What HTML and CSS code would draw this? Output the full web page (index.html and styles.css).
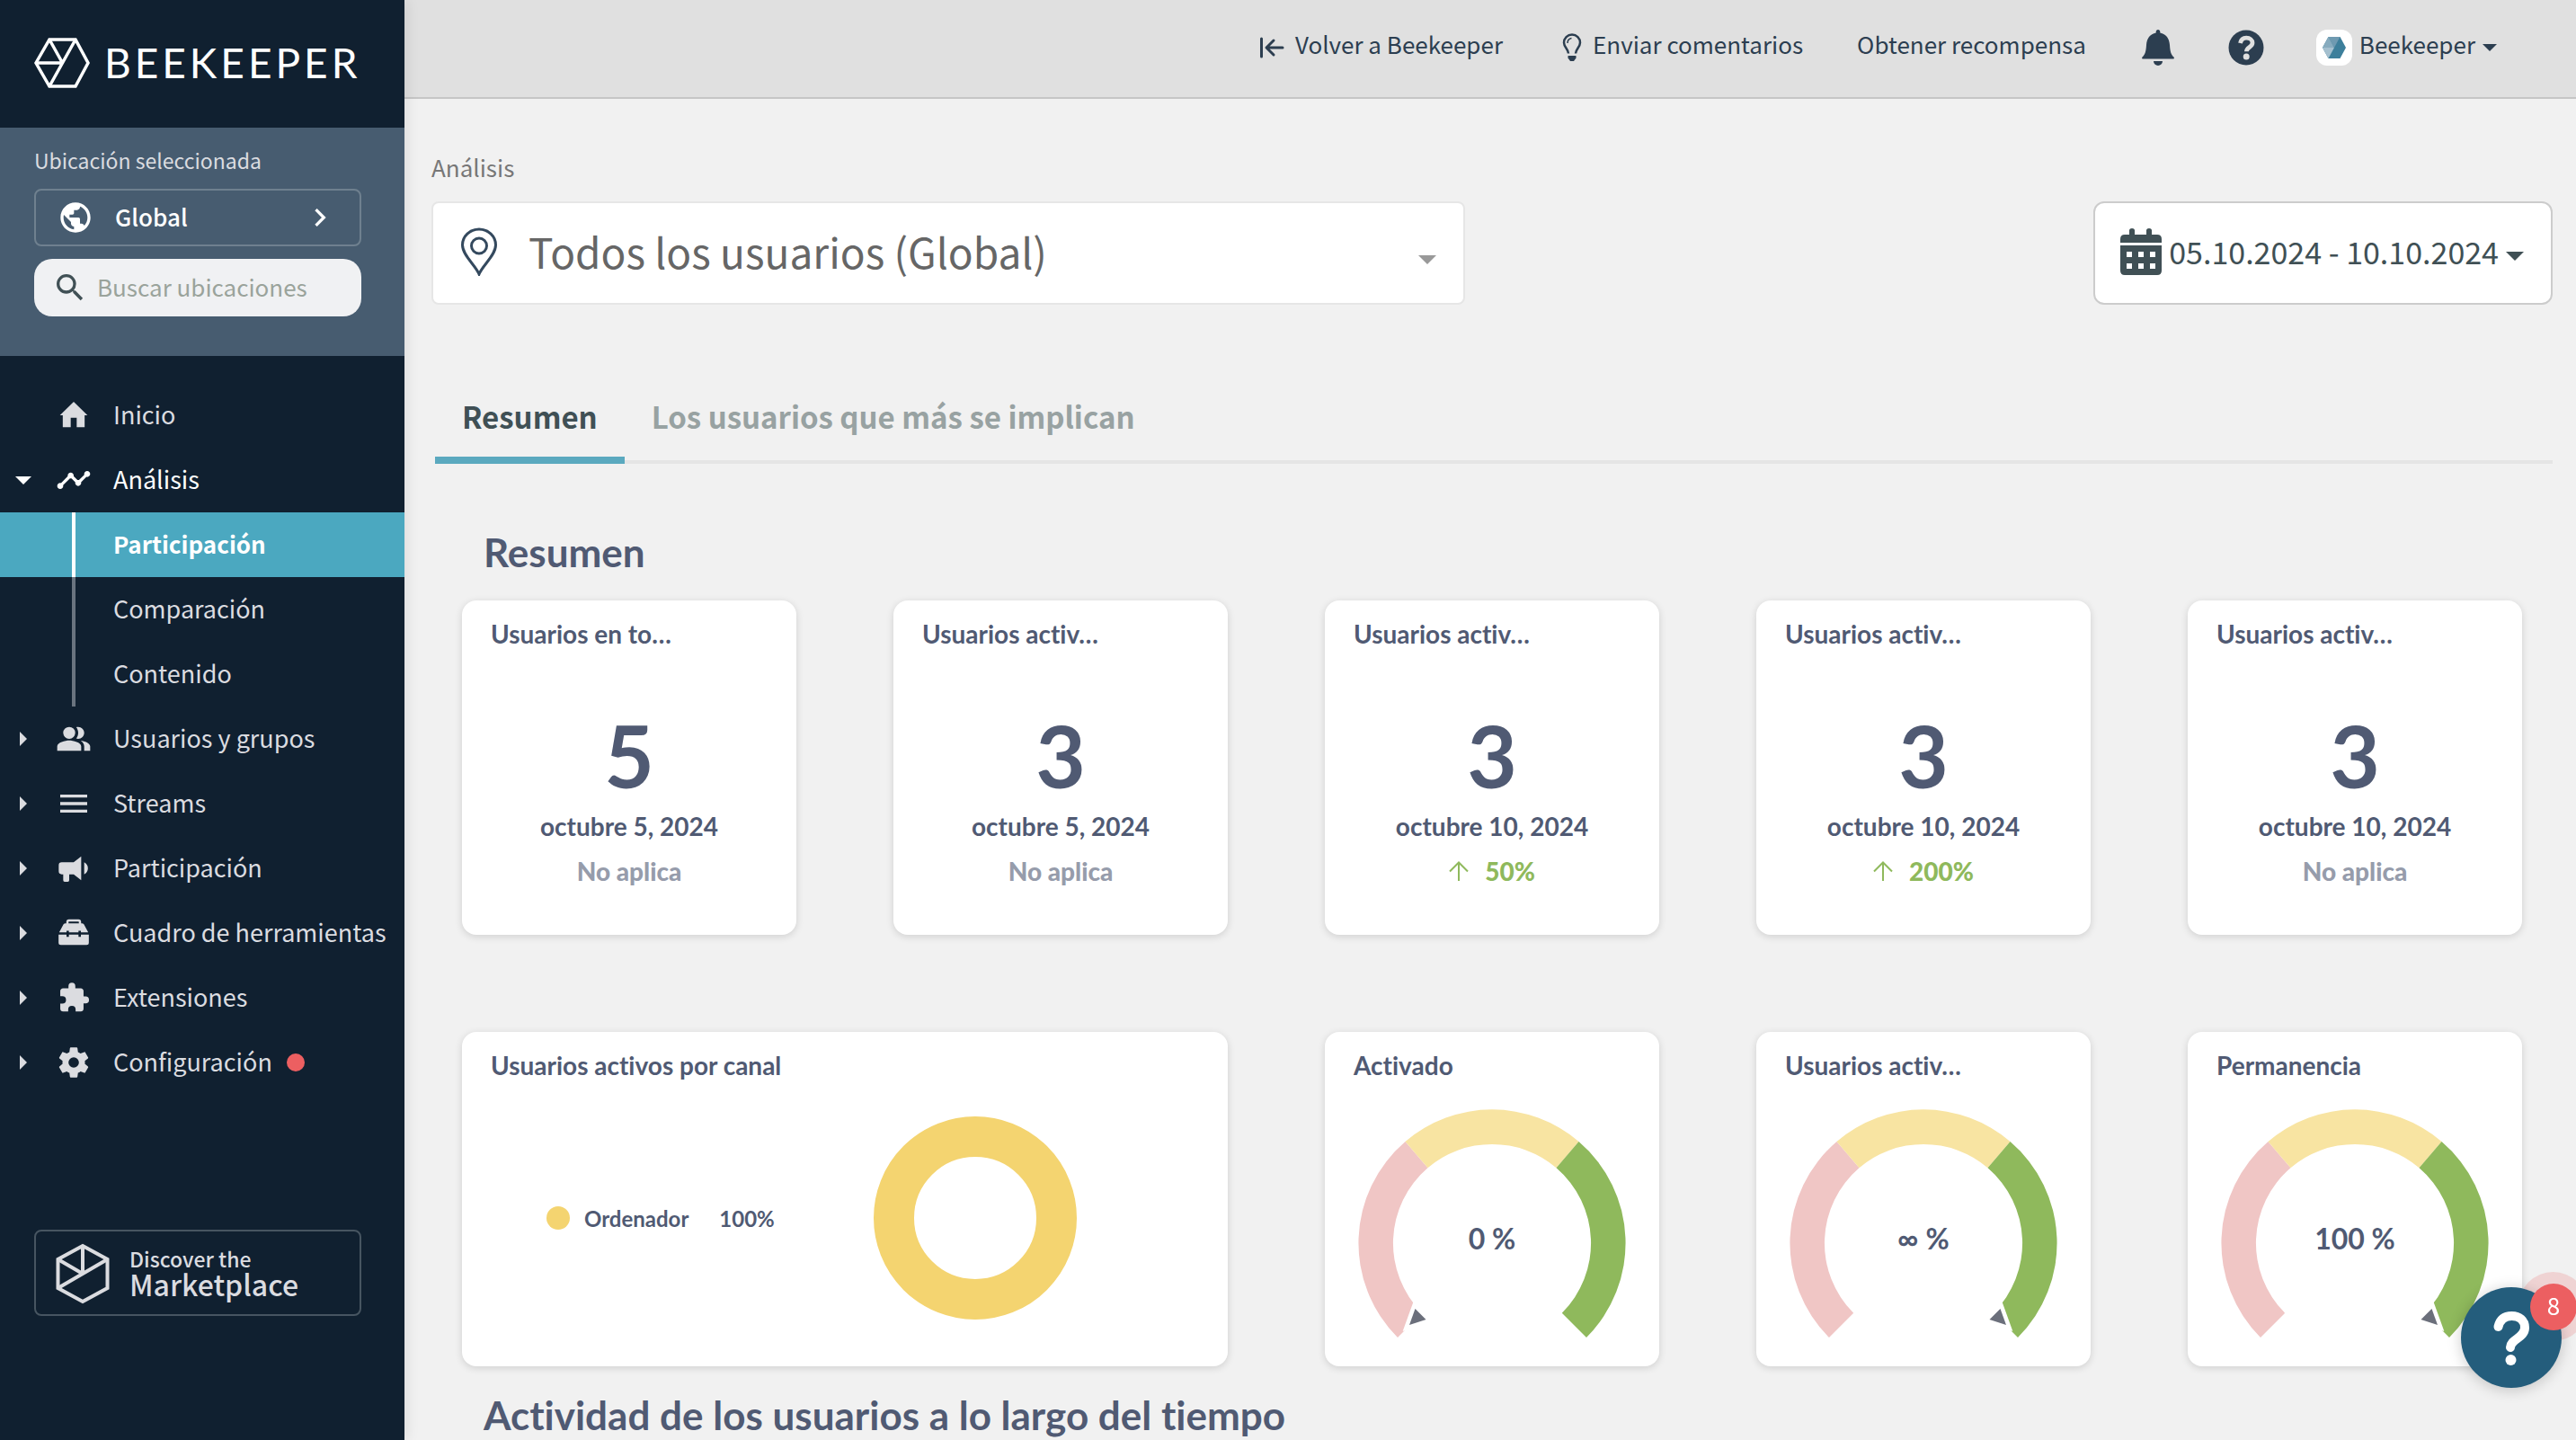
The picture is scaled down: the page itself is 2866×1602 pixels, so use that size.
FILE: index.html
```
<!DOCTYPE html>
<html lang="es">
<head>
  <meta charset="UTF-8">
  <meta name="viewport" content="width=device-width, initial-scale=1.0">
  <title>Análisis - Beekeeper</title>
  <link rel="stylesheet" href="styles.css">
</head>
<body>
  <div class="app">
    <aside class="sidebar">
      <a class="logo" href="#">
        <svg class="logo-mark" viewBox="0 0 62 56" fill="none" stroke="#fff" stroke-width="3.5">
          <path d="M2 28 17 2h29l14 26-14 26H17z"/>
          <path d="M2 28h29M17 2l14.500 26M46 2 17 54"/>
        </svg>
        <span class="logo-text">BEEKEEPER</span>
      </a>

      <div class="location">
        <div class="location-label">Ubicación seleccionada</div>
        <button class="location-button">
          <svg class="icon" viewBox="0 0 24 24"><path d="M12 2C6.480 2 2 6.480 2 12s4.480 10 10 10 10-4.480 10-10S17.520 2 12 2zm-1 17.930c-3.950-.490-7-3.850-7-7.930 0-.620.080-1.210.210-1.790L9 15v1c0 1.100.900 2 2 2v1.930zm6.900-2.540c-.260-.810-1-1.390-1.900-1.390h-1v-3c0-.550-.450-1-1-1H8v-2h2c.550 0 1-.450 1-1V7h2c1.100 0 2-.900 2-2v-.410c2.930 1.190 5 4.060 5 7.410 0 2.080-.800 3.970-2.100 5.390z"/></svg>
          <span>Global</span>
          <svg class="icon" viewBox="0 0 24 24"><path d="M10 6 8.590 7.410 13.170 12l-4.580 4.590L10 18l6-6z"/></svg>
        </button>
        <label class="search">
          <svg class="icon" viewBox="0 0 24 24"><path d="M15.500 14h-.790l-.280-.270A6.471 6.471 0 0 0 16 9.500 6.500 6.500 0 1 0 9.500 16c1.610 0 3.090-.590 4.230-1.570l.270.280v.790l5 4.990L20.490 19l-4.990-5zm-6 0C7.010 14 5 11.990 5 9.500S7.010 5 9.500 5 14 7.010 14 9.500 11.990 14 9.500 14z"/></svg>
          <input type="search" placeholder="Buscar ubicaciones" aria-label="Buscar ubicaciones">
        </label>
      </div>

      <nav class="menu">
        <a class="menu-item" href="#">
          <svg class="icon" viewBox="0 0 24 24"><path d="M10 20v-6.300h4V20h5.300v-8h1.900L12 3l-9.200 9h1.900v8z"/></svg>
          <span>Inicio</span>
        </a>
        <a class="menu-item expandable open" href="#">
          <svg class="icon" viewBox="0 0 24 24"><path d="M23 8c0 1.100-.900 2-2 2-.180 0-.350-.020-.510-.070l-3.560 3.550c.050.160.070.340.070.520 0 1.100-.900 2-2 2s-2-.900-2-2c0-.180.020-.360.070-.520l-2.550-2.550c-.160.050-.340.070-.520.070s-.360-.020-.520-.070l-4.550 4.560c.050.160.070.330.070.510 0 1.100-.900 2-2 2s-2-.900-2-2 .900-2 2-2c.180 0 .350.020.510.070l4.560-4.550C8.020 9.360 8 9.180 8 9c0-1.100.900-2 2-2s2 .900 2 2c0 .180-.020.360-.070.520l2.550 2.550c.160-.050.340-.070.520-.070s.360.020.520.070l3.550-3.560C19.020 8.350 19 8.180 19 8c0-1.100.900-2 2-2s2 .900 2 2z"/></svg>
          <span>Análisis</span>
        </a>
        <div class="submenu">
          <a class="submenu-item active" href="#"><span>Participación</span></a>
          <a class="submenu-item" href="#"><span>Comparación</span></a>
          <a class="submenu-item" href="#"><span>Contenido</span></a>
        </div>
        <a class="menu-item expandable" href="#">
          <svg class="icon" viewBox="0 0 24 24"><circle cx="9" cy="8" r="4"/><path d="M16.670 13.130C18.040 14.060 19 15.320 19 17v3h4v-3c0-2.180-3.570-3.470-6.330-3.870zM15 12c2.210 0 4-1.790 4-4s-1.790-4-4-4c-.470 0-.910.100-1.330.240C14.500 5.270 15 6.580 15 8s-.500 2.730-1.330 3.760c.420.140.860.240 1.330.240zM9 13c-2.670 0-8 1.340-8 4v3h16v-3c0-2.660-5.330-4-8-4z"/></svg>
          <span>Usuarios y grupos</span>
        </a>
        <a class="menu-item expandable" href="#">
          <svg class="icon" viewBox="0 0 24 24"><path d="M3 18h18v-2H3zm0-5h18v-2H3zm0-7v2h18V6z"/></svg>
          <span>Streams</span>
        </a>
        <a class="menu-item expandable" href="#">
          <svg class="icon" viewBox="0 0 24 24"><path d="M12 8H4a2 2 0 0 0-2 2v4a2 2 0 0 0 2 2h1v4a1 1 0 0 0 1 1h2a1 1 0 0 0 1-1v-4h3l5 4V4l-5 4m9.500 4c0 1.710-.960 3.260-2.500 4V8c1.530.750 2.500 2.300 2.500 4z"/></svg>
          <span>Participación</span>
        </a>
        <a class="menu-item expandable" href="#">
          <svg class="icon" viewBox="0 0 24 24">
            <path d="M7.800 6V4.600q0-1 1-1h6.400q1 0 1 1V6" fill="none" stroke="currentColor" stroke-width="1.500"/>
            <path d="M6.500 5.500h11q.800 0 1.300.700l2.900 5.300H2.300l2.900-5.300q.500-.700 1.300-.700zM1.900 13h20.200v5.500q0 1.500-1.500 1.500H3.400q-1.500 0-1.500-1.500z"/>
            <path d="M8 10.500v4M16 10.500v4" stroke="#102030" stroke-width="1.600"/>
          </svg>
          <span>Cuadro de herramientas</span>
        </a>
        <a class="menu-item expandable" href="#">
          <svg class="icon" viewBox="0 0 24 24"><path transform="translate(1.200 1.100) scale(.914)" d="M20.500 11H19V7c0-1.100-.900-2-2-2h-4V3.500a2.500 2.500 0 0 0-5 0V5H4c-1.100 0-2 .900-2 2v3.800h1.500a2.700 2.700 0 0 1 0 5.400H2V20c0 1.100.900 2 2 2h3.800v-1.500a2.700 2.700 0 0 1 5.400 0V22H17c1.100 0 2-.900 2-2v-4h1.500a2.500 2.500 0 0 0 0-5z"/></svg>
          <span>Extensiones</span>
        </a>
        <a class="menu-item expandable" href="#">
          <svg class="icon" viewBox="0 0 24 24"><path d="M12 15.500A3.500 3.500 0 0 1 8.500 12 3.500 3.500 0 0 1 12 8.500a3.500 3.500 0 0 1 3.500 3.500 3.500 3.500 0 0 1-3.500 3.500m7.430-2.530c.040-.320.070-.640.070-.970s-.030-.660-.070-1l2.110-1.630c.190-.150.240-.420.120-.640l-2-3.460c-.120-.220-.390-.310-.610-.220l-2.490 1c-.520-.390-1.060-.730-1.690-.980l-.370-2.650A.506.506 0 0 0 14 2h-4c-.250 0-.460.180-.500.420l-.370 2.650c-.630.250-1.170.590-1.690.980l-2.490-1c-.220-.090-.490 0-.610.220l-2 3.460c-.130.220-.070.490.120.640L4.570 11c-.040.340-.070.670-.070 1s.030.650.070.970l-2.110 1.660c-.190.150-.250.420-.120.640l2 3.460c.120.220.390.300.610.220l2.490-1.010c.520.400 1.060.740 1.690.990l.370 2.650c.040.240.250.420.500.420h4c.250 0 .460-.180.500-.420l.370-2.650c.630-.260 1.170-.590 1.690-.990l2.490 1.010c.220.080.490 0 .610-.220l2-3.460c.120-.220.070-.490-.120-.640z"/></svg>
          <span>Configuración</span>
          <i class="dot"></i>
        </a>
      </nav>

      <a class="marketplace" href="#">
        <svg viewBox="0 0 60 68" fill="none" stroke="currentColor" stroke-width="4">
          <path d="M30 3 57.500 18v32L30 65 2.500 50V18z"/>
          <path d="M30 3v31M2.500 18 30 34M57.500 18 2.500 50"/>
        </svg>
        <span class="marketplace-text">
          <small>Discover the</small>
          <strong>Marketplace</strong>
        </span>
      </a>
    </aside>

    <div class="page">
      <header class="topbar">
        <a class="top-link back" href="#">
          <svg width="28" height="24" viewBox="0 0 28 24" fill="none" stroke="currentColor" stroke-width="3" stroke-linecap="round" stroke-linejoin="round"><path d="M2.500 2v20M26 12H9M16 4l-8 8 8 8"/></svg>
          <span>Volver a Beekeeper</span>
        </a>
        <a class="top-link feedback" href="#">
          <svg width="22" height="32" viewBox="0 0 22 32" fill="none" stroke="currentColor" stroke-width="2.500">
            <path d="M7 22.500C7 18 2 15.500 2 10.500a9 9 0 0 1 18 0c0 5-5 7.500-5 12"/>
            <path d="M6 11c0-3 1.500-5 4.500-5.500" stroke-width="1.500"/>
            <path d="M6.500 25h9v2.500L13 31H9l-2.500-3.500z" fill="currentColor" stroke="none"/>
          </svg>
          <span>Enviar comentarios</span>
        </a>
        <a class="top-link reward" href="#"><span>Obtener recompensa</span></a>
        <button class="icon-button bell" aria-label="Notificaciones">
          <svg width="36" height="40" viewBox="0 0 36 40"><path d="M18 0c1.400 0 2.300 1 2.300 2.300v1.200C27 4.800 30.500 10 31 17c.5 8 1.500 10.500 4.500 13.500.8.900.3 2-.9 2H1.400c-1.200 0-1.700-1.100-.9-2C3.500 27.500 4.500 25 5 17 5.500 10 9 4.800 15.700 3.500V2.300C15.700 1 16.600 0 18 0zM13 35h10a5 5 0 0 1-10 0z"/></svg>
        </button>
        <button class="icon-button help" aria-label="Ayuda">
          <svg width="40" height="40" viewBox="0 0 40 40"><circle cx="20" cy="20" r="19.500"/><path d="M13.500 15c.8-4 3-5.800 6.700-5.800 4 0 6.800 2.300 6.800 5.600 0 4.700-6.600 4.600-6.600 9.400" fill="none" stroke="#e0e0e0" stroke-width="4.800"/><circle cx="20.200" cy="30" r="3.500" fill="#e0e0e0"/></svg>
        </button>
        <button class="account">
          <svg class="avatar" viewBox="0 0 40 40">
            <path d="M7 20 13.500 8h13L33 20l-6.500 12h-13z" fill="#3d7f9b"/>
            <path d="M13.500 8h13L20 20z" fill="#6f9ab1"/>
            <path d="M13.500 8 7 20h13z" fill="#87abbe"/>
            <path d="M7 20h13l-6.500 12z" fill="#a5c0cf"/>
          </svg>
          <span>Beekeeper</span>
          <i class="caret"></i>
        </button>
      </header>

      <main class="content">
        <label class="filter-label" for="segment">Análisis</label>
        <div class="filters">
          <div class="segment">
            <svg width="42" height="54" viewBox="0 0 42 54" fill="none" stroke="#34495e" stroke-width="3"><path d="M21 52C17 42 2.500 31 2.500 19.500a18.500 17.500 0 0 1 37 0C39.500 31 25 42 21 52z"/><circle cx="21" cy="20.500" r="8.500"/></svg>
            <select id="segment">
              <option>Todos los usuarios (Global)</option>
            </select>
            <i class="caret"></i>
          </div>
          <button class="date-range">
            <svg width="46" height="52" viewBox="0 0 46 52">
              <path d="M0 16v-4q0-5 5-5h5V2.500a3 2.500 0 0 1 6 0V7h13V2.500a3 2.500 0 0 1 6 0V7h6q5 0 5 5v4zM0 19h46v28q0 5-5 5H5q-5 0-5-5z"/>
              <path d="M7 26h6v6H7zm13 0h6v6h-6zm13 0h6v6h-6zM7 39h6v6H7zm13 0h6v6h-6zm13 0h6v6h-6z" fill="#fff"/>
            </svg>
            <span>05.10.2024 - 10.10.2024</span>
            <i class="caret"></i>
          </button>
        </div>

        <nav class="tabs">
          <a class="tab active" href="#">Resumen</a>
          <a class="tab" href="#">Los usuarios que más se implican</a>
        </nav>

        <section class="dashboard">
          <h2>Resumen</h2>
          <div class="cards">
            <article class="card">
              <h3>Usuarios en to…</h3>
              <div class="number">5</div>
              <div class="date">octubre 5, 2024</div>
              <div class="change">No aplica</div>
            </article>
            <article class="card">
              <h3>Usuarios activ…</h3>
              <div class="number">3</div>
              <div class="date">octubre 5, 2024</div>
              <div class="change">No aplica</div>
            </article>
            <article class="card">
              <h3>Usuarios activ…</h3>
              <div class="number">3</div>
              <div class="date">octubre 10, 2024</div>
              <div class="change up">
                <svg width="22" height="22" viewBox="0 0 22 22"><path d="M11 22V1.500M1 11.500l10-10 10 10"/></svg>
                <span>50%</span>
              </div>
            </article>
            <article class="card">
              <h3>Usuarios activ…</h3>
              <div class="number">3</div>
              <div class="date">octubre 10, 2024</div>
              <div class="change up">
                <svg width="22" height="22" viewBox="0 0 22 22"><path d="M11 22V1.500M1 11.500l10-10 10 10"/></svg>
                <span>200%</span>
              </div>
            </article>
            <article class="card">
              <h3>Usuarios activ…</h3>
              <div class="number">3</div>
              <div class="date">octubre 10, 2024</div>
              <div class="change">No aplica</div>
            </article>

            <article class="card wide">
              <h3>Usuarios activos por canal</h3>
              <div class="channel">
                <div class="legend">
                  <i class="legend-dot"></i>
                  <span>Ordenador</span>
                  <span class="legend-value">100%</span>
                </div>
                <svg width="226" height="226" viewBox="0 0 226 226"><circle cx="113" cy="113" r="90.500" fill="none" stroke="#f4d470" stroke-width="45"/></svg>
              </div>
            </article>
            <article class="card">
              <h3>Activado</h3>
              <svg class="gauge" viewBox="-149 -149 298 256">
                <path class="low" d="M-105 105A148.500 148.500 0 0 1-96.500-113L-71.500-83.700A110 110 0 0 0-77.800 77.800z"/>
                <path class="mid" d="M-96.500-113A148.500 148.500 0 0 1 96.500-113L71.500-83.700A110 110 0 0 0-71.500-83.700z"/>
                <path class="high" d="M96.500-113A148.500 148.500 0 0 1 105 105L77.800 77.800A110 110 0 0 0 71.500-83.700z"/>
                <path class="pointer" d="M-73.500 85-85.500 73-92 91z"/>
                <text x="0" y="7">0 %</text>
              </svg>
            </article>
            <article class="card">
              <h3>Usuarios activ…</h3>
              <svg class="gauge" viewBox="-149 -149 298 256">
                <path class="low" d="M-105 105A148.500 148.500 0 0 1-96.500-113L-71.500-83.700A110 110 0 0 0-77.800 77.800z"/>
                <path class="mid" d="M-96.500-113A148.500 148.500 0 0 1 96.500-113L71.500-83.700A110 110 0 0 0-71.500-83.700z"/>
                <path class="high" d="M96.500-113A148.500 148.500 0 0 1 105 105L77.800 77.800A110 110 0 0 0 71.500-83.700z"/>
                <path class="pointer" d="M73.500 85 85.500 73 92 91z"/>
                <text x="0" y="7">∞ %</text>
              </svg>
            </article>
            <article class="card">
              <h3>Permanencia</h3>
              <svg class="gauge" viewBox="-149 -149 298 256">
                <path class="low" d="M-105 105A148.500 148.500 0 0 1-96.500-113L-71.500-83.700A110 110 0 0 0-77.800 77.800z"/>
                <path class="mid" d="M-96.500-113A148.500 148.500 0 0 1 96.500-113L71.500-83.700A110 110 0 0 0-71.500-83.700z"/>
                <path class="high" d="M96.500-113A148.500 148.500 0 0 1 105 105L77.800 77.800A110 110 0 0 0 71.500-83.700z"/>
                <path class="pointer" d="M73.500 85 85.500 73 92 91z"/>
                <text x="0" y="7">100 %</text>
              </svg>
            </article>
          </div>
          <h2>Actividad de los usuarios a lo largo del tiempo</h2>
        </section>
      </main>
    </div>
  </div>

  <div class="help-widget">
    <span class="pulse"></span>
    <button class="help-button" aria-label="Centro de ayuda">
      <svg viewBox="0 0 112 112"><path d="M41.500 44C43.500 35.500 49 32 56.500 32 65 32 71 37 71 45c0 11.500-15.500 12.500-16 22" fill="none" stroke="#fff" stroke-width="10" stroke-linecap="round"/><circle cx="55.500" cy="81" r="6" fill="#fff"/></svg>
    </button>
    <span class="help-count">8</span>
  </div>
</body>
</html>
```

FILE: styles.css
```
* {
  box-sizing: border-box;
}
body {
  margin: 0;
  background-color: #f1f1f1;
  font-family: "Noto Sans CJK SC", "Noto Sans", sans-serif;
  font-size: 26px;
  color: #2c3e50;
}
a {
  color: inherit;
  text-decoration: none;
}
button, input, select {
  font: inherit;
  color: inherit;
  margin: 0;
  padding: 0;
  border: none;
  background: none;
}
button {
  cursor: pointer;
}
svg {
  flex-shrink: 0;
  fill: currentColor;
}
svg[fill="none"] {
  fill: none;
}
.app {
  display: flex;
  height: 100vh;
  overflow: hidden;
}
.icon {
  width: 40px;
  height: 40px;
}
.caret {
  flex-shrink: 0;
  border: 10px solid transparent;
  border-top-color: currentColor;
  border-bottom: none;
}

/* sidebar */
.sidebar {
  position: relative;
  z-index: 1;
  flex: 0 0 450px;
  background-color: #102030;
  color: #dbdce0;
  box-shadow: 0 0 16px rgba(0, 0, 0, 0.12);
}
.logo {
  display: flex;
  align-items: center;
  gap: 16px;
  height: 142px;
  padding: 0 38px 2px;
  color: white;
}
.logo-mark {
  width: 62px;
  height: 56px;
}
.logo-text {
  font-family: Lato, sans-serif;
  font-size: 46px;
  line-height: 56px;
  letter-spacing: 4px;
}
.location {
  height: 254px;
  padding: 16px 48px 0 38px;
  background-color: #475c70;
}
.location-label {
  font-size: 23px;
  line-height: 40px;
  margin-bottom: 12px;
}
.location-button {
  display: flex;
  align-items: center;
  width: 100%;
  height: 64px;
  padding: 0 24px;
  border: 2px solid #6f808f;
  border-radius: 8px;
  color: white;
  font-weight: 500;
}
.location-button span {
  flex: 1;
  padding: 0 24px 4px;
  text-align: left;
}
.search {
  display: flex;
  align-items: center;
  gap: 10px;
  height: 64px;
  margin-top: 14px;
  padding: 0 20px;
  border-radius: 20px;
  background-color: #f0f1f3;
  color: #405055;
}
.search input {
  width: 100%;
  height: 60px;
  padding-bottom: 4px;
  outline: none;
}
.search input::placeholder {
  color: #9aa39b;
}
.menu {
  padding-top: 30px;
}
.menu-item, .submenu-item {
  display: flex;
  align-items: center;
  height: 72px;
  font-size: 27px;
}
.menu-item {
  gap: 24px;
  padding-left: 62px;
}
.menu-item span, .submenu-item span {
  padding-bottom: 4px;
  white-space: nowrap;
}
.expandable {
  padding-left: 22px;
}
.expandable::before {
  content: "";
  margin-right: 8px;
  border: 8px solid transparent;
  border-left-color: #dbdce0;
  border-right: none;
}
.expandable.open {
  padding-left: 17px;
  color: white;
}
.expandable.open::before {
  margin-right: 3px;
  border: 9px solid transparent;
  border-top-color: white;
  border-bottom: none;
}
.submenu-item {
  position: relative;
  padding-left: 126px;
}
.submenu-item::before {
  content: "";
  position: absolute;
  left: 80px;
  width: 4px;
  height: 100%;
  background-color: #6a747f;
}
.submenu-item.active {
  background-color: #4ba8c0;
  color: white;
  font-size: 26px;
  font-weight: 700;
}
.submenu-item.active::before {
  background-color: white;
}
.dot {
  width: 20px;
  height: 20px;
  margin-left: -8px;
  border-radius: 50%;
  background-color: #ec5f61;
}
.marketplace {
  display: flex;
  align-items: center;
  gap: 22px;
  height: 96px;
  margin: 150px 48px 0 38px;
  padding: 2px 22px 0;
  border: 2px solid #475561;
  border-radius: 8px;
}
.marketplace svg {
  width: 60px;
  height: 68px;
}
.marketplace-text {
  display: flex;
  flex-direction: column;
  padding-bottom: 4px;
}
.marketplace small {
  font-size: 23px;
  line-height: 26px;
  font-weight: 500;
}
.marketplace strong {
  font-size: 32px;
  line-height: 30px;
  font-weight: 500;
}

/* top bar */
.page {
  flex: 1;
  min-width: 0;
}
.topbar {
  display: flex;
  justify-content: flex-end;
  height: 110px;
  padding: 33px 88px 0 0;
  background-color: #e0e0e0;
  border-bottom: 2px solid #c6c6c6;
}
.top-link, .account {
  display: flex;
  align-items: center;
  height: 40px;
  white-space: nowrap;
}
.top-link span, .account span {
  height: 40px;
  line-height: 32px;
}
.top-link {
  gap: 12px;
  margin-right: 60px;
}
.feedback {
  margin-left: 6px;
}
.icon-button {
  width: 40px;
  height: 40px;
  margin-right: 58px;
}
.icon-button svg {
  display: block;
  margin: 0 auto;
}
.account {
  gap: 8px;
}
.account .caret {
  border-width: 8px;
  border-bottom: none;
}
.avatar {
  width: 40px;
  height: 40px;
  border-radius: 12px;
  background-color: white;
}

/* content */
.content {
  padding: 56px 26px 0 30px;
}
.filter-label {
  display: block;
  margin-bottom: 18px;
  line-height: 40px;
  color: #777;
}
.filters {
  display: flex;
  justify-content: space-between;
  gap: 40px;
}
.segment {
  display: flex;
  align-items: center;
  flex: 0 1 1150px;
  height: 115px;
  padding: 0 30px;
  background-color: white;
  border: 2px solid #e6e6e6;
  border-radius: 8px;
  color: #999;
}
.segment svg, .date-range svg {
  margin-bottom: 4px;
}
.segment select {
  flex: 1;
  height: 111px;
  padding: 0 0 6px 34px;
  appearance: none;
  outline: none;
  font-size: 46px;
  color: #666;
}
.segment .caret {
  margin-top: 14px;
}
.date-range {
  display: flex;
  align-items: center;
  gap: 8px;
  height: 115px;
  padding: 0 30px 0 28px;
  background-color: white;
  border: 2px solid #ccc;
  border-radius: 12px;
  font-size: 34px;
  color: #405055;
}
.date-range span {
  padding-bottom: 4px;
}
.date-range .caret {
  margin-top: 6px;
}
.tabs {
  display: flex;
  margin: 93px 0 0 4px;
  border-bottom: 4px solid #e5e5e5;
}
.tab {
  height: 84px;
  margin-bottom: -4px;
  padding: 0 30px;
  border-bottom: 8px solid transparent;
  font-size: 33px;
  line-height: 62px;
  font-weight: 700;
  color: #98a2a2;
}
.tab.active {
  border-bottom-color: #5ba9bf;
  color: #405055;
}

/* dashboard */
.dashboard {
  padding: 72px 34px 0;
  font-family: Lato, sans-serif;
  font-weight: 700;
  font-variant-ligatures: none;
  color: #505a73;
}
.dashboard h2 {
  margin: 0 0 28px 24px;
  font-size: 44px;
  line-height: 52px;
}
.cards {
  display: grid;
  grid-template-columns: repeat(5, 1fr);
  gap: 108px;
  margin-bottom: 28px;
}
.card {
  min-height: 372px;
  padding: 20px 32px;
  background-color: white;
  border-radius: 16px;
  box-shadow: 0 2px 8px rgba(0, 0, 0, 0.14);
  text-align: center;
}
.card.wide {
  grid-column: span 2;
}
.card h3 {
  margin: 0;
  font-size: 28px;
  line-height: 34px;
  text-align: left;
  white-space: nowrap;
}
.number {
  margin-top: 70px;
  font-size: 96px;
  line-height: 96px;
}
.date {
  margin: 14px 0 16px;
  font-size: 28px;
  line-height: 34px;
}
.change {
  display: flex;
  justify-content: center;
  align-items: center;
  gap: 18px;
  font-size: 28px;
  line-height: 34px;
  font-weight: 900;
  color: #969cab;
}
.change svg {
  fill: none;
  stroke: currentColor;
  stroke-width: 2;
}
.change.up {
  color: #8fb95c;
}
.channel {
  display: flex;
  align-items: center;
  gap: 110px;
  margin-top: 40px;
  padding-left: 62px;
}
.legend {
  display: flex;
  align-items: center;
  font-size: 24px;
}
.legend-dot {
  width: 26px;
  height: 26px;
  margin-right: 16px;
  border-radius: 50%;
  background-color: #f4d470;
}
.legend-value {
  margin-left: 34px;
}
.gauge {
  width: 298px;
  height: 256px;
  margin-top: 32px;
}
.gauge .low {
  fill: #f0c6c5;
}
.gauge .mid {
  fill: #f8e4a2;
}
.gauge .high {
  fill: #8fb95c;
}
.gauge .pointer {
  fill: #6b6f7b;
  stroke: white;
  stroke-width: 9;
  paint-order: stroke;
}
.gauge text {
  font-size: 32px;
  text-anchor: middle;
}

/* floating help */
.help-widget {
  position: fixed;
  right: 16px;
  bottom: 58px;
  z-index: 2;
  width: 112px;
  height: 112px;
}
.help-button {
  position: relative;
  width: 112px;
  height: 112px;
  border-radius: 50%;
  background-color: #245d7c;
  box-shadow: 0 2px 16px rgba(0, 0, 0, 0.2);
}
.help-button svg {
  display: block;
}
.pulse, .help-count {
  position: absolute;
  border-radius: 50%;
}
.pulse {
  top: -17px;
  right: -29px;
  width: 77px;
  height: 77px;
  background-color: rgba(236, 95, 97, 0.2);
}
.help-count {
  top: -4px;
  right: -17px;
  width: 52px;
  height: 52px;
  background-color: #ec5f61;
  color: white;
  line-height: 48px;
  text-align: center;
}
```
